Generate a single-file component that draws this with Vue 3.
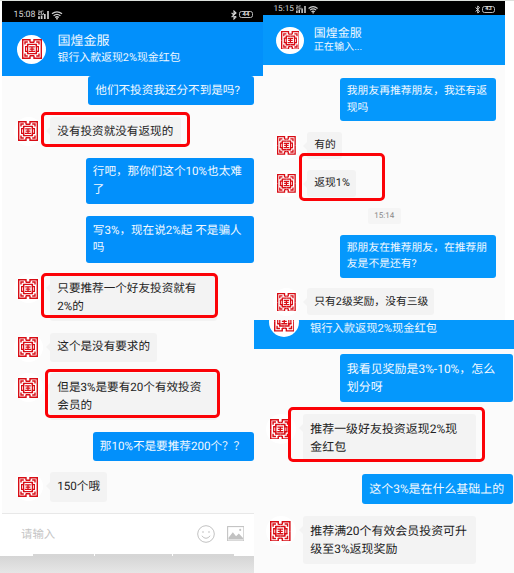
<script setup>
import { h } from 'vue'

// Fretwork seal: one corner drawn once and mirrored into the other three.
const corner = 'M8 3.5V.7H.7V10M3 5.6V3H5.8M3 7.6H5.6V5.4H10M8 3.3H10'
const Seal = () =>
  h('svg', { viewBox: '0 0 20 20', width: '100%', height: '100%' }, [
    h('rect', { width: 20, height: 20, fill: '#fff' }),
    h('g', { fill: 'none', stroke: '#d80d15', 'stroke-width': 1.4 }, [
      h('path', { d: corner }),
      h('path', { d: corner, transform: 'translate(20 0) scale(-1 1)' }),
      h('path', { d: corner, transform: 'translate(0 20) scale(1 -1)' }),
      h('path', { d: corner, transform: 'translate(20 20) scale(-1 -1)' }),
      h('path', { d: 'M3.6 7.5V12.5M16.4 7.5V12.5M5.6 6V14M14.4 6V14', 'stroke-width': 1.2 }),
      h('path', { d: 'M7.2 7.8H12.8M7.6 10H12.4M7 12.4H13M10 8V12.4', 'stroke-width': 1.25 })
    ])
  ])

const StatusIcons = () =>
  h('svg', { class: 'net', viewBox: '0 0 25 10', fill: 'none', stroke: '#d0d0d0' }, [
    h('path', { d: 'M0 1H2.2V2.7H.3V4.5H2.5M3.4 1H5.5M3.4 1V4.4H5.5V2.8', 'stroke-width': 0.8 }),
    h('path', { d: 'M1 9V6.2M3.6 9V5.4M6.8 9V4M10 9V1', 'stroke-width': 1.7 }),
    h('path', { d: 'M14 3.8Q19 0 24 3.8M15.6 5.7Q19 3 22.4 5.7M17.2 7.5Q19 6 20.8 7.5', 'stroke-width': 1.3 }),
    h('circle', { cx: 19, cy: 8.7, r: 0.9, fill: '#d0d0d0', stroke: 'none' })
  ])

const Bluetooth = () =>
  h('svg', { class: 'bt', viewBox: '0 0 6 10', fill: 'none', stroke: '#d8d8d8', 'stroke-width': 1.1 }, [
    h('path', { d: 'M.6 2.8L5 7L3 9V1L5 3L.6 7.2' })
  ])

const left = [
  { me: true, w: 166, lines: ['他们不投资我还分不到是吗?'] },
  { w: 131, lines: ['没有投资就没有返现的'] },
  { me: true, w: 168.5, lines: ['行吧，那你们这个10%也太难', '了'] },
  { me: true, w: 168.5, lines: ['写3%，现在说2%起 不是骗人', '吗'] },
  { w: 167, lines: ['只要推荐一个好友投资就有', '2%的'] },
  { w: 107, lines: ['这个是没有要求的'] },
  { w: 167, lines: ['但是3%是要有20个有效投资', '会员的'] },
  { me: true, w: 161.5, lines: ['那10%不是要推荐200个？？'] },
  { w: 57, lines: ['150个哦'] }
]
const topRight = [
  { me: true, w: 156, lines: ['我朋友再推荐朋友，我还有返', '现吗'] },
  { w: 35, lines: ['有的'] },
  { w: 49, lines: ['返现1%'] },
  { time: '15:14' },
  { me: true, w: 156, lines: ['那朋友在推荐朋友，在推荐朋', '友是不是还有?'] },
  { w: 127, lines: ['只有2级奖励，没有三级'] }
]
const bottomRight = [
  { me: true, w: 173.5, lines: ['我看见奖励是3%-10%，怎么', '划分呀'] },
  { w: 173, lines: ['推荐一级好友投资返现2%现', '金红包'] },
  { me: true, w: 151, lines: ['这个3%是在什么基础上的'] },
  { w: 173, lines: ['推荐满20个有效会员投资可升', '级至3%返现奖励'] }
]

const marks = [
  [40.5, 112, 149.5, 34.5],
  [41, 272.5, 177, 45],
  [45.3, 369.3, 175, 49],
  [299.3, 153, 85.5, 48.3],
  [288, 407.3, 197, 54.7]
]
const box = ([x, y, w, hgt]) => ({ left: x + 'px', top: y + 'px', width: w + 'px', height: hgt + 'px' })

const Chat = (props) =>
  h('div', { class: 'chat' }, props.items.map((m) =>
    m.time
      ? h('div', { class: 'time' }, m.time)
      : h('div', { class: ['row', { me: m.me }] }, [
          m.me ? null : h('div', { class: 'avatar' }, [h('div', { class: 'seal' }, [h(Seal)])]),
          h('div', { class: 'bubble', style: { width: m.w + 'px' } }, m.lines.map((l) => h('div', { class: 'line' }, l)))
        ])
  ))
Chat.props = ['items']
</script>

<template>
  <div class="collage">
    <section class="panel first">
      <div class="status"><span>15:08</span><StatusIcons /><i class="fill"></i><Bluetooth /><b class="battery">44</b></div>
      <header class="head">
        <div class="avatar"><div class="seal"><Seal /></div></div>
        <div class="names"><div class="title">国煌金服</div><div class="sub">银行入款返现2%现金红包</div></div>
      </header>
      <Chat :items="left" />
      <footer class="entry">
        <span class="hint">请输入</span>
        <svg class="smile" viewBox="0 0 18 18" fill="none" stroke="#c2c2c2" stroke-width="1">
          <circle cx="9" cy="9" r="8.3" />
          <path d="M4.8 10.8Q9 15.8 13.2 10.8" />
          <circle cx="6" cy="7" r=".8" fill="#bbb" stroke="none" /><circle cx="12" cy="7" r=".8" fill="#bbb" stroke="none" />
        </svg>
        <svg class="photo" viewBox="0 0 18 16">
          <rect x=".6" y=".6" width="16.8" height="14.8" fill="#fff" stroke="#c2c2c2" stroke-width="1.1" />
          <path d="M1.5 14V12L6 6.5L9.3 10.6L12.2 7.8L16.5 12.3V14Z" fill="#c2c2c2" />
          <circle cx="13.6" cy="4" r="1.1" fill="#c2c2c2" />
        </svg>
      </footer>
      <div class="dashes"><i></i><i></i><i></i></div>
      <div class="shade"></div>
    </section>
    <div class="column">
      <section class="panel second">
        <div class="status"><span>15:15</span><StatusIcons /><i class="fill"></i><Bluetooth /><b class="battery">43</b></div>
        <header class="head">
          <div class="avatar"><div class="seal"><Seal /></div></div>
          <div class="names"><div class="title">国煌金服</div><div class="sub">正在输入...</div></div>
        </header>
        <Chat :items="topRight" />
      </section>
      <section class="panel third">
        <header class="head">
          <div class="avatar"><div class="seal"><Seal /></div></div>
          <div class="names"><div class="sub">银行入款返现2%现金红包</div></div>
        </header>
        <Chat :items="bottomRight" />
      </section>
    </div>
    <div v-for="(m, i) in marks" :key="i" class="mark" :style="box(m)"></div>
  </div>
</template>

<style>
body { margin: 0; background: #fff; }
.collage .row { display: flex; align-items: flex-start; }
.collage .row.me { justify-content: flex-end; }
.collage .avatar { flex: none; width: var(--av); height: var(--av); border-radius: 50%; background: #fff; display: flex; align-items: center; justify-content: center; }
.collage .seal { width: var(--seal); height: var(--seal); }
.collage .seal svg { display: block; }
.collage .chat { display: flex; flex-direction: column; gap: var(--gap); padding-left: var(--inset); }
.collage .bubble { position: relative; box-sizing: border-box; padding: var(--pad) 0 var(--pad) 7.3px; margin-left: var(--lead); border-radius: 3px; background: #f3f3f3; color: #222; font-size: var(--fs); line-height: var(--lh); white-space: nowrap; }
.collage .row:not(.me) .bubble::before { content: ''; position: absolute; left: -4px; top: 10px; border: 4px solid transparent; border-left: 0; border-right-color: #f3f3f3; }
.collage .me .bubble { background: var(--blue); color: #f2f9ff; margin-left: 0; }
.collage .line { height: var(--lh); }
.collage .time { align-self: center; box-sizing: border-box; width: 33px; height: 15.6px; line-height: 15.6px; text-align: center; font-size: 8px; color: #888; background: #f5f5f5; border-radius: 2px; }
.collage .net { width: 25px; height: 10px; margin-left: 3px; }
.collage .bt { width: 6px; height: 10px; margin-right: 2px; }
.collage .second .net { width: 22.5px; height: 9px; margin-left: 2px; }
.collage .second .bt { width: 5.5px; height: 9px; }
</style>

<style scoped>
.collage { position: relative; box-sizing: border-box; width: 514px; height: 573px; display: flex; overflow: hidden; border-top: 1px solid #dde1dd; background: linear-gradient(90deg, #fff 2px, #fbfbfb 2px, #fbfbfb 505px, #fff 505px); font-family: Roboto, "Noto Sans CJK SC", sans-serif; text-rendering: geometricPrecision; }
.panel { --blue: #0290fb; display: flex; flex-direction: column; }
.first { --av: 29px; --seal: 20px; --gap: 11.55px; --inset: 11.5px; --lead: 7.5px; --pad: 5.8px; --fs: 11.6px; --lh: 17.6px; width: 252px; margin-left: 2px; flex: none; }
.column { flex: none; width: 260px; display: flex; flex-direction: column; }
.second { --blue: #0598fc; --av: 27.2px; --seal: 18.8px; --gap: 10.8px; --inset: 10px; --lead: 6.8px; --pad: 5.2px; --fs: 10.8px; --lh: 16.4px; width: 242px; height: 319px; margin-left: 9px; }
.third { --blue: #0598fc; --av: 30px; --seal: 20.6px; --gap: 12px; --inset: 11.5px; --lead: 7.5px; --pad: 6px; --fs: 11.95px; --lh: 18px; width: 260px; height: 253px; background: #fbfbfb; }
.status { box-sizing: border-box; display: flex; align-items: center; background: #000; color: #d8d8d8; flex: none; }
.fill { flex: 1; }
.battery { box-sizing: border-box; width: 14px; height: 7.5px; border: 1px solid #bbb; border-radius: 2.5px; font-size: 6px; line-height: 5.8px; text-align: center; color: #ddd; }
.head { flex: none; box-sizing: border-box; display: flex; align-items: center; background: var(--blue); color: #edf7ff; white-space: nowrap; }
.first .status { width: 261px; height: 21px; padding: 6px 10px 0 11.5px; font-size: 8.8px; }
.first .head { width: 261px; height: 54.2px; padding-left: 15px; }
.first .names { margin-left: 11.5px; }
.first .title { font-size: 13px; line-height: 17px; }
.first .sub { font-size: 10.9px; line-height: 15px; }
.second .status { height: 14px; padding: 2px 10px 0 10.5px; font-size: 8.2px; }
.second .battery { width: 13px; height: 7px; font-size: 5.5px; line-height: 5.2px; }
.second .head { height: 50.2px; padding-left: 13.4px; }
.second .names { margin-left: 10.2px; }
.second .title { font-size: 12px; line-height: 15px; }
.second .sub { font-size: 10.1px; line-height: 13px; }
.second .chat { padding-top: 13px; padding-right: 9.5px; }
.third .head { height: 29px; padding-left: 15px; align-items: flex-start; overflow: hidden; }
.third .head .avatar { margin-top: -13.5px; }
.third .names { margin-left: 11px; }
.third .sub { font-size: 11.25px; line-height: 18px; }
.third .chat { padding-top: 5px; padding-right: 1px; }
.entry { box-sizing: border-box; height: 41px; margin-top: 11.4px; border-top: 1px solid #e8e8e8; background: #fff; display: flex; align-items: center; padding: 0 10px 1px 19px; flex: none; }
.hint { flex: 1; font-size: 11.4px; color: #c4c4c4; }
.smile { width: 18px; height: 18px; margin-right: 12px; }
.photo { width: 17.5px; height: 15.5px; }
.dashes { display: flex; gap: 1px; height: 2px; background: #fff; padding: 0 20px 0 31px; flex: none; }
.dashes i { flex: 61; background: #d6d6d6; }
.dashes i:nth-child(2) { flex: 77; }
.shade { flex: 1; margin-left: -2px; background: linear-gradient(#d5d5d5, #e6e6e6); }
.mark { position: absolute; box-sizing: border-box; margin-top: -1px; border: 3px solid #fb0207; border-radius: 5px; }
</style>
